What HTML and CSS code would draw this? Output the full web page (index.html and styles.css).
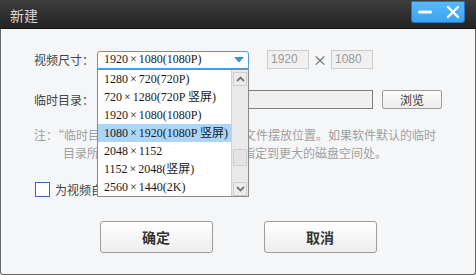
FILE: index.html
```html
<!DOCTYPE html>
<html lang="zh">
<head>
<meta charset="utf-8">
<link rel="stylesheet" href="styles.css">
</head>
<body>
<div class="window">
  <div class="titlebar">
    <span class="title">新建</span>
    <div class="winctl">
      <svg class="ic-min" width="16" height="6" viewBox="0 0 16 6"><rect x="1" y="1.5" width="14" height="3" rx="1.5" fill="#fff"/></svg>
      <svg class="ic-close" width="14" height="14" viewBox="0 0 14 14"><path d="M2 2 L12 12 M12 2 L2 12" stroke="#fff" stroke-width="2.4" stroke-linecap="round"/></svg>
    </div>
  </div>
  <div class="content">
    <div class="row row-size">
      <span class="label">视频尺寸：</span>
      <div class="select">
        <div class="select-box">
          <span class="select-text">1920<span class="mul">×</span>1080(1080P)</span>
          <svg class="select-arrow" width="10" height="6" viewBox="0 0 10 6"><path d="M0 0 H10 L5 5.5 Z" fill="#3a8fe0"/></svg>
        </div>
        <div class="dropdown">
          <ul class="options">
            <li>1280<span class="mul">×</span>720(720P)</li>
            <li>720<span class="mul">×</span>1280(720P 竖屏)</li>
            <li>1920<span class="mul">×</span>1080(1080P)</li>
            <li class="active">1080<span class="mul">×</span>1920(1080P 竖屏)</li>
            <li>2048<span class="mul">×</span>1152</li>
            <li>1152<span class="mul">×</span>2048(竖屏)</li>
            <li>2560<span class="mul">×</span>1440(2K)</li>
          </ul>
          <div class="scrollbar">
            <div class="sb-btn"><svg width="9" height="6" viewBox="0 0 9 6"><path d="M1 5 L4.5 1.5 L8 5" fill="none" stroke="#777" stroke-width="1.8"/></svg></div>
            <div class="sb-track"><div class="sb-thumb"></div></div>
            <div class="sb-btn"><svg width="9" height="6" viewBox="0 0 9 6"><path d="M1 1 L4.5 4.5 L8 1" fill="none" stroke="#777" stroke-width="1.8"/></svg></div>
          </div>
        </div>
      </div>
      <div class="dims">
        <span class="dim-box">1920</span>
        <span class="dim-x">×</span>
        <span class="dim-box">1080</span>
      </div>
    </div>
    <div class="row row-dir">
      <span class="label">临时目录：</span>
      <div class="dir-input"></div>
      <button class="btn-browse">浏览</button>
    </div>
    <p class="note">
      <span class="note-line">注：“临时目录”是视频合成过程中临时文件摆放位置。如果软件默认的临时</span>
      <span class="note-line indent">目录所在的磁盘空间不足，请将其指定到更大的磁盘空间处。</span>
    </p>
    <label class="check-row">
      <span class="checkbox"></span>
      <span class="check-label">为视频自动生成临时目录</span>
    </label>
    <div class="actions">
      <button class="btn">确定</button>
      <button class="btn">取消</button>
    </div>
  </div>
</div>
</body>
</html>
```

FILE: styles.css
```css
* { box-sizing: border-box; }
html, body { margin: 0; padding: 0; }
body {
  width: 476px;
  height: 275px;
  overflow: hidden;
  background: #ffffff;
  font-family: "Noto Sans CJK SC", "Noto Sans", sans-serif;
  font-size: 12px;
  color: #444;
}
.window {
  width: 476px;
  height: 275px;
  display: flex;
  flex-direction: column;
}
.titlebar {
  height: 29px;
  flex: none;
  background: linear-gradient(#3d3d3d, #232323);
  display: flex;
  justify-content: space-between;
  align-items: flex-start;
  padding: 0 11px 0 10px;
  border-bottom: 1px solid #111;
}
.title {
  color: #d8d8d8;
  font-size: 14px;
  line-height: 14px;
  margin-top: 8px;
}
.winctl {
  margin-top: 1px;
  width: 54px;
  height: 22px;
  border: 1px solid #2477c2;
  border-radius: 0 0 3px 3px;
  background: linear-gradient(#5ab8fb, #3aa3f2);
  display: flex;
  align-items: center;
  padding-left: 5px;
  gap: 13px;
}
.content {
  flex: 1;
  background: #f5f6f8;
  border: 1px solid #666;
  border-top: 0;
  border-radius: 0 0 3px 3px;
  padding: 21px 0 0 33px;
  position: relative;
}
.row {
  display: flex;
  align-items: center;
}
.label {
  width: 63px;
  color: #444;
  font-size: 12px;
  line-height: 18px;
  white-space: nowrap;
}
.row-size { height: 19px; }
.select {
  position: relative;
  width: 152px;
  height: 18px;
}
.select-box {
  height: 18px;
  border: 1px solid #4c9be2;
  border-radius: 3px 3px 0 0;
  background: #fff;
  display: flex;
  align-items: center;
  justify-content: space-between;
  padding: 0 4px 0 6px;
}
.select-text, .options li {
  font-family: "Liberation Serif", "Noto Sans CJK SC", serif;
  font-size: 12px;
  color: #1a1a1a;
  white-space: nowrap;
}
.mul {
  margin: 0 2px;
}
.dropdown {
  position: absolute;
  top: 18px;
  left: 0;
  width: 152px;
  height: 128px;
  border: 1px solid #8a8a8a;
  background: #fff;
  display: flex;
  z-index: 5;
}
.options {
  list-style: none;
  margin: 0;
  padding: 0;
  flex: 1;
}
.options li {
  height: 18px;
  line-height: 18px;
  padding-left: 6px;
}
.options li.active { background: #acd6f9; }
.scrollbar {
  width: 17px;
  background: #e9e9e9;
  border-left: 1px solid #d0d0d0;
  display: flex;
  flex-direction: column;
  padding: 2px 1px 0;
}
.sb-btn {
  height: 14px;
  border: 1px solid #cfcfcf;
  background: #ececec;
  display: flex;
  align-items: center;
  justify-content: center;
}
.sb-track {
  flex: 1;
  display: flex;
  flex-direction: column;
  justify-content: flex-end;
  padding-bottom: 16px;
}
.sb-thumb {
  height: 17px;
  border: 1px solid #cfcfcf;
  background: #e4e4e4;
}
.dims {
  display: flex;
  align-items: center;
  margin-left: 18px;
}
.dim-box {
  width: 42px;
  height: 19px;
  border: 1px solid #cdcdcd;
  background: #f0f0f0;
  color: #9a9a9a;
  font-family: "Liberation Sans", sans-serif;
  font-size: 12px;
  line-height: 17px;
  padding-left: 3px;
}
.dim-x {
  width: 22px;
  text-align: center;
  color: #666;
  font-size: 14px;
  line-height: 17px;
}
.row-dir {
  margin-top: 21px;
  height: 19px;
}
.dir-input {
  width: 276px;
  height: 19px;
  border: 1px solid #7e7e7e;
  background: #f0f0f0;
}
.btn-browse {
  margin-left: 9px;
  width: 60px;
  height: 19px;
  border: 1px solid #9c9c9c;
  border-radius: 2px;
  background: linear-gradient(#fdfdfd, #ececec);
  font-family: "Noto Sans CJK SC", sans-serif;
  font-size: 12px;
  color: #333;
  padding: 0;
  line-height: 17px;
}
.note {
  margin: 17px 0 0 0;
  color: #a0a0a0;
  font-size: 12px;
  line-height: 18px;
  display: flex;
  flex-direction: column;
}
.note-line { white-space: nowrap; }
.note-line.indent { padding-left: 29px; }
.check-row {
  margin-top: 20px;
  display: flex;
  align-items: center;
  gap: 5px;
  height: 15px;
  margin-left: 1px;
}
.checkbox {
  width: 15px;
  height: 15px;
  border: 1px solid #2a6db8;
  background: #fff;
}
.check-label {
  color: #444;
  font-size: 12px;
}
.actions {
  position: absolute;
  left: 0;
  right: 0;
  bottom: 21px;
  display: flex;
  justify-content: center;
  gap: 51px;
}
.btn {
  width: 113px;
  height: 32px;
  border: 1px solid #9d9d9d;
  border-radius: 3px;
  background: linear-gradient(#ffffff, #ededed);
  font-family: "Noto Sans CJK SC", sans-serif;
  font-size: 14px;
  font-weight: bold;
  color: #333;
  padding: 0;
}
```
